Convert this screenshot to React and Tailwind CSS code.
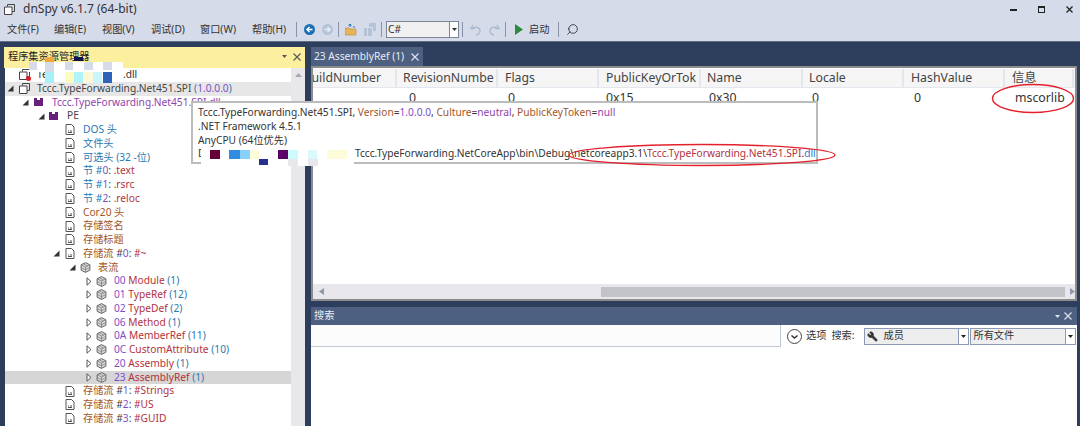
import { Wrench, Search } from "lucide-react";

const font = { fontFamily: '"Noto Sans", "Noto Sans CJK SC", sans-serif' };

/* ---------- small tree icons ---------- */
function DocIcon() {
  return (
    <svg width="10" height="11" viewBox="0 0 10 11" className="shrink-0">
      <path d="M1 .5h5.5L9 3v7.5H1z" fill="#fff" stroke="#555" />
      <path d="M3 7h1M5 7h2M3 8.5h4" stroke="#555" />
    </svg>
  );
}

function CubeIcon() {
  return (
    <svg width="11" height="11" viewBox="0 0 11 11" className="shrink-0">
      <path d="M5.5.6l4.4 2.2v5.4l-4.4 2.2-4.4-2.2V2.8z" fill="#d8d8d8" stroke="#666" />
      <path d="M1.1 2.8l4.4 2.2 4.4-2.2M5.5 5v5.4M3.3 1.8l4.4 2.2M1.1 5.5l4.4 2.2 4.4-2.2" fill="none" stroke="#777" strokeWidth=".7" />
    </svg>
  );
}

function PurpleIcon() {
  return (
    <svg width="9" height="8" viewBox="0 0 9 8" className="shrink-0">
      <path d="M0 0h3v2h3V0h3v8H0z" fill="#68217a" />
    </svg>
  );
}

function RefIcon() {
  return (
    <svg width="11" height="11" viewBox="0 0 11 11" className="shrink-0">
      <path d="M3.5 2.5V.5h7v7H8" fill="none" stroke="#444" />
      <path d="M.5 3h7.5v7.5H.5z" fill="#fff" stroke="#444" />
    </svg>
  );
}

function Arrow({ open }) {
  if (open) {
    return (
      <svg width="7" height="7" viewBox="0 0 7 7" className="shrink-0">
        <path d="M6.5 .5v6h-6z" fill="#333" />
      </svg>
    );
  }
  return (
    <svg width="6" height="9" viewBox="0 0 6 9" className="shrink-0">
      <path d="M1 .8L5 4.5 1 8.2z" fill="#fff" stroke="#555" />
    </svg>
  );
}

/* ---------- colours for text runs ---------- */
const B = "text-[#2b78b0]";
const O = "text-[#a3561f]";
const P = "text-[#7d4fc6]";
const R = "text-[#b3323c]";
const K = "text-[#444]";
const V = "text-[#8e44ad]";

// x = where the label starts, arrowAt = left edge of the expander, both in page pixels
const rows = [
  { x: 37, icon: "ref", text: [["Tccc.TypeForwarding.Net451.SPI", K], [" (", B], ["1.0.0.0", P], [")", B]], bg: "bg-[#e6e6e6]", arrow: "open", arrowAt: 7 },
  { x: 52, icon: "purple", text: [["Tccc.TypeForwarding.Net451.SPI.dll", V]], arrow: "open", arrowAt: 22 },
  { x: 67, icon: "purple", text: [["PE", K]], arrow: "open", arrowAt: 38 },
  { x: 83, icon: "doc", text: [["DOS 头", B]] },
  { x: 83, icon: "doc", text: [["文件头", B]] },
  { x: 83, icon: "doc", text: [["可选头 (32 -位)", B]] },
  { x: 83, icon: "doc", text: [["节 #", B], ["0", P], [": ", K], [".text", R]] },
  { x: 83, icon: "doc", text: [["节 #", B], ["1", P], [": ", K], [".rsrc", R]] },
  { x: 83, icon: "doc", text: [["节 #", B], ["2", P], [": ", K], [".reloc", R]] },
  { x: 83, icon: "doc", text: [["Cor20 头", O]] },
  { x: 83, icon: "doc", text: [["存储签名", O]] },
  { x: 83, icon: "doc", text: [["存储标题", O]] },
  { x: 83, icon: "doc", text: [["存储流 ", O], ["#", K], ["0", P], [": ", K], ["#~", R]], arrow: "open", arrowAt: 53 },
  { x: 98, icon: "cube", text: [["表流", O]], arrow: "open", arrowAt: 69 },
  { x: 114, icon: "cube", text: [["00 ", P], ["Module", R], [" (1)", B]], arrow: "closed", arrowAt: 86 },
  { x: 114, icon: "cube", text: [["01 ", P], ["TypeRef", R], [" (12)", B]], arrow: "closed", arrowAt: 86 },
  { x: 114, icon: "cube", text: [["02 ", P], ["TypeDef", R], [" (2)", B]], arrow: "closed", arrowAt: 86 },
  { x: 114, icon: "cube", text: [["06 ", P], ["Method", R], [" (1)", B]], arrow: "closed", arrowAt: 86 },
  { x: 114, icon: "cube", text: [["0A ", P], ["MemberRef", R], [" (11)", B]], arrow: "closed", arrowAt: 86 },
  { x: 114, icon: "cube", text: [["0C ", P], ["CustomAttribute", R], [" (10)", B]], arrow: "closed", arrowAt: 86 },
  { x: 114, icon: "cube", text: [["20 ", P], ["Assembly", R], [" (1)", B]], arrow: "closed", arrowAt: 86 },
  { x: 114, icon: "cube", text: [["23 ", P], ["AssemblyRef", R], [" (1)", B]], arrow: "closed", arrowAt: 86, bg: "bg-[#d6d6d6]" },
  { x: 83, icon: "doc", text: [["存储流 ", O], ["#", K], ["1", P], [": ", K], ["#Strings", R]] },
  { x: 83, icon: "doc", text: [["存储流 ", O], ["#", K], ["2", P], [": ", K], ["#US", R]] },
  { x: 83, icon: "doc", text: [["存储流 ", O], ["#", K], ["3", P], [": ", K], ["#GUID", R]] },
];

function TreeRow({ row }) {
  const icon =
    row.icon === "doc" ? <DocIcon /> : row.icon === "cube" ? <CubeIcon /> : row.icon === "ref" ? <RefIcon /> : <PurpleIcon />;
  return (
    <div className={`relative flex items-center h-[13.75px] whitespace-pre text-[10.2px] ${row.bg || ""}`} style={{ paddingLeft: row.x - 5 - 18 }}>
      {row.arrow && (
        <span className="absolute flex items-center h-full top-0" style={{ left: row.arrowAt - 5 }}>
          <Arrow open={row.arrow === "open"} />
        </span>
      )}
      <span className="flex items-center w-[11px] mr-[7px]">{icon}</span>
      <span>
        {row.text.map(([t, c], i) => (
          <span key={i} className={c}>
            {t}
          </span>
        ))}
      </span>
    </div>
  );
}

const columns = [
  ["uildNumber", 84, "justify-end pr-[14px]"],
  ["RevisionNumbe", 101, "pl-[6px]"],
  ["Flags", 101, "pl-[7px]"],
  ["PublicKeyOrTok", 102, "pl-[7px]"],
  ["Name", 102, "pl-[6px]"],
  ["Locale", 101, "pl-[6px]"],
  ["HashValue", 101, "pl-[7px]"],
  ["信息", 69, "pl-[7px]"],
];

const cells = [
  ["", 84, ""],
  ["0", 101, "pl-[12px]"],
  ["0", 101, "pl-[10px]"],
  ["0x15", 102, "pl-[7px]"],
  ["0x30", 102, "pl-[8px]"],
  ["0", 101, "pl-[9px]"],
  ["0", 101, "pl-[10px]"],
  ["mscorlib", 69, "pl-[10px]"],
];

/* mosaic patches that blur out the path in the original */
const patches = [
  [45, 57, 9, 5, "#f5a93b"], [74, 57, 9, 4, "#0c1250"], [29, 62, 94, 10, "#ffffff"],
  [29, 62, 8, 8, "#d5dbe8"], [45, 62, 9, 10, "#d5dbe8"], [65, 62, 8, 8, "#d5dbe8"], [84, 62, 9, 8, "#d5dbe8"], [103, 62, 9, 8, "#d5dbe8"],
  [45, 72, 9, 11, "#a8f0f8"], [65, 72, 9, 11, "#fdfcc0"], [74, 72, 9, 11, "#b0f4fa"], [84, 72, 9, 11, "#fdf9d8"], [93, 72, 9, 11, "#c8f6fa"], [103, 72, 9, 11, "#2e62b8"],
  [201, 149, 153, 9, "#ffffff"], [201, 158, 153, 8, "#ffffff"],
  [210, 150, 10, 9, "#660038"], [229, 150, 11, 9, "#2f8ce0"], [240, 150, 10, 9, "#86d0fb"], [250, 150, 9, 9, "#fdfcd8"],
  [259, 159, 9, 6, "#28308c"], [278, 150, 10, 9, "#5c0068"], [288, 150, 10, 9, "#cdfafc"], [308, 150, 9, 9, "#d8fafc"],
  [327, 150, 20, 9, "#fdfcd8"], [288, 159, 10, 7, "#e8e8ec"], [308, 159, 10, 7, "#e8e8ec"],
];

function Caret({ className = "" }) {
  return (
    <svg width="5" height="3" viewBox="0 0 5 3" className={className}>
      <path d="M0 0h5L2.5 3z" fill="currentColor" />
    </svg>
  );
}

function Sep() {
  return <div className="w-px h-[15px] bg-[#8a92a6] shrink-0" />;
}

function Combo({ label, icon, width }) {
  return (
    <div className="flex h-[17px] border border-[#8c98b4] bg-[#eeeeee] text-[10.2px] text-[#333]" style={{ width }}>
      <div className="flex-1 flex items-center pl-[2px] gap-[5px]">
        {icon}
        {label}
      </div>
      <div className="w-[10px] bg-white border-l border-[#8c98b4] flex items-center justify-center">
        <Caret className="text-[#222]" />
      </div>
    </div>
  );
}

export default function App() {
  return (
    <div className="relative w-[1080px] h-[426px] overflow-hidden bg-[#2d3e5c] flex flex-col" style={font}>
      {/* Title + menu */}
      <header className="h-[42px] shrink-0 bg-[#d6dbe9] border-b border-[#5f6c86]">
        <div className="flex items-center h-[18px] pl-[4px] text-[12px] text-[#333]">
          <RefIcon />
          <span className="ml-[8px]">dnSpy v6.1.7 (64-bit)</span>
          <div className="ml-auto flex items-center gap-[21px] pr-[7px]">
            <div className="w-[7px] h-[2px] bg-[#222] mt-[2px]" />
            <div className="w-[7px] h-[7px] border border-[#222] border-t-2" />
            <svg width="7" height="7" viewBox="0 0 7 7"><path d="M.5.5l6 6M6.5.5l-6 6" stroke="#222" strokeWidth="1.3" /></svg>
          </div>
        </div>
        <div className="flex items-center h-[23px] pl-[7px] text-[10.2px] text-[#333]">
          <div className="flex w-[284px] shrink-0">
            <span className="w-[47px]">文件(F)</span>
            <span className="w-[48px]">编辑(E)</span>
            <span className="w-[49px]">视图(V)</span>
            <span className="w-[49px]">调试(D)</span>
            <span className="w-[52px]">窗口(W)</span>
            <span>帮助(H)</span>
          </div>
          <div className="ml-[5px]"><Sep /></div>
          <svg width="11" height="11" viewBox="0 0 11 11" className="ml-[7px]"><circle cx="5.5" cy="5.5" r="5.5" fill="#1b6fb5" /><path d="M8.5 5.5H3.5M5.5 3L3 5.5 5.5 8" stroke="#fff" strokeWidth="1.5" fill="none" /></svg>
          <svg width="11" height="11" viewBox="0 0 11 11" className="ml-[7px]"><circle cx="5.5" cy="5.5" r="5.5" fill="#b4c3d8" /><path d="M2.5 5.5h5M5.5 3L8 5.5 5.5 8" stroke="#e8edf4" strokeWidth="1.5" fill="none" /></svg>
          <div className="ml-[5px]"><Sep /></div>
          <svg width="12" height="13" viewBox="0 0 12 13" className="ml-[6px]"><path d="M0 5h4l1 1h6v6H0z" fill="#e8b45a" stroke="#b98a35" strokeWidth=".6" /><path d="M5 4V1M3.5 2.5L5 1l1.5 1.5M8 4h2" stroke="#1b6fb5" fill="none" /></svg>
          <svg width="12" height="13" viewBox="0 0 12 13" className="ml-[7px]"><path d="M0 5h3v8H0zM4 5h4v8H4zM5 0h7v8H9V4H5z" fill="#b4c3d8" /></svg>
          <div className="ml-[5px]"><Sep /></div>
          <div className="ml-[4px] flex w-[73px] h-[17px] border border-[#7d8699] bg-[#f0f0f0] text-[10.2px]">
            <span className="flex-1 pl-[1px] leading-[15px]">C#</span>
            <span className="w-[9px] bg-white border-l border-[#7d8699] flex items-center justify-center"><Caret /></span>
          </div>
          <div className="ml-[3px]"><Sep /></div>
          <svg width="12" height="12" viewBox="0 0 12 12" className="ml-[7px]"><path d="M3 1L1 4.5h4M1.5 4.5C5 2 10 3 10 7c0 2-2 3.5-4 4" fill="none" stroke="#a9bad0" strokeWidth="1.4" /></svg>
          <svg width="12" height="12" viewBox="0 0 12 12" className="ml-[6px]"><path d="M9 1l2 3.5H7M10.5 4.5C7 2 2 3 2 7c0 2 2 3.5 4 4" fill="none" stroke="#a9bad0" strokeWidth="1.4" /></svg>
          <div className="ml-[5px]"><Sep /></div>
          <svg width="8" height="11" viewBox="0 0 8 11" className="ml-[9px]"><path d="M0 0l8 5.5L0 11z" fill="#2b8a3e" /></svg>
          <span className="ml-[6px] w-[21px] shrink-0 whitespace-nowrap">启动</span>
          <div className="ml-[8px]"><Sep /></div>
          <Search size={13} className="ml-[7px] -scale-x-100 text-[#333]" strokeWidth={1.6} />
        </div>
      </header>

      {/* Main */}
      <div className="flex-1 min-h-0 flex pl-[4px] pt-[5px] gap-[5px]">
        {/* Tree panel */}
        <aside className="w-[301px] shrink-0 flex flex-col">
          <div className="flex items-center h-[21px] bg-[#fcef9e] pl-[4px] pr-[4px] pb-[2px] text-[10.2px] text-[#222]">
            程序集资源管理器
            <Caret className="ml-auto text-[#555]" />
            <span className="ml-[6px] text-[#555]">
              <svg width="8" height="8" viewBox="0 0 8 8"><path d="M.5.5l7 7M7.5.5l-7 7" stroke="#555" strokeWidth="1.1" /></svg>
            </span>
          </div>
          <div className="flex-1 flex min-h-0 pl-px">
            <div className="flex-1 bg-white overflow-hidden">
              <div className="relative flex items-center h-[13.75px] pl-[14px] text-[10.2px] text-[#333]">
                <span className="relative w-[11px] mr-[7px]">
                  <RefIcon />
                  <span className="absolute -right-[1px] -bottom-[1px] w-[5px] h-[5px] rounded-full bg-[#d8202c]" />
                </span>
                <span className="w-[86px]">Te</span>
                <span>.dll</span>
              </div>
              {rows.map((r, i) => (
                <TreeRow key={i} row={r} />
              ))}
            </div>
            <div className="w-[14px] bg-[#e8e8ec] flex justify-center pt-[5px]">
              <svg width="7" height="4" viewBox="0 0 7 4"><path d="M3.5 0L7 4H0z" fill="#a8a8b0" /></svg>
            </div>
          </div>
        </aside>

        {/* Right column */}
        <main className="w-[766px] shrink-0 flex flex-col ml-[1px]">
          <div className="flex h-[19px]">
            <div className="flex items-center w-[112px] bg-[#4d6082] text-[10.2px] text-[#e8ecf2] pl-[3px]">
              23 AssemblyRef (1)
              <svg width="8" height="8" viewBox="0 0 8 8" className="ml-auto mr-[4px]"><path d="M.5.5l7 7M7.5.5l-7 7" stroke="#dfe5ee" strokeWidth="1.1" /></svg>
            </div>
          </div>
          <section className="h-[235px] border-2 border-[#8c8c8c] bg-white flex flex-col text-[#333]">
            <div className="flex h-[19px] bg-[#f5f5f5] border-b border-[#e4e6ee] mt-[1px] text-[12.3px] text-[#444]">
              {columns.map(([t, w, c]) => (
                <div key={t} className={`flex items-center shrink-0 overflow-hidden whitespace-nowrap border-r-2 border-[#e4e6ee] ${c}`} style={{ width: w }}>
                  {t}
                </div>
              ))}
            </div>
            <div className="flex h-[21px] text-[12.3px]">
              {cells.map(([t, w, c], i) => (
                <div key={i} className={`flex items-center shrink-0 overflow-hidden ${c}`} style={{ width: w }}>
                  {t}
                </div>
              ))}
            </div>
            <div className="flex-1" />
            <div className="h-[15px] bg-[#e8e8ec] flex items-center">
              <svg width="5" height="7" viewBox="0 0 5 7" className="ml-[6px]"><path d="M5 0v7L0 3.5z" fill="#8f97a8" /></svg>
              <div className="ml-[277px] w-[467px] h-[10px] bg-[#c2c3c9]" />
              <svg width="5" height="7" viewBox="0 0 5 7" className="ml-[5px]"><path d="M0 0v7l5-3.5z" fill="#8f97a8" /></svg>
            </div>
          </section>

          {/* Search panel */}
          <section className="mt-[6px] flex-1 flex flex-col min-h-0">
            <div className="flex items-center h-[18px] bg-[#4d6082] pl-[3px] pr-[5px] text-[10.2px] text-[#e8ecf2]">
              搜索
              <Caret className="ml-auto text-[#dfe5ee]" />
              <svg width="8" height="8" viewBox="0 0 8 8" className="ml-[4px]"><path d="M.5.5l7 7M7.5.5l-7 7" stroke="#dfe5ee" strokeWidth="1.1" /></svg>
            </div>
            <div className="flex-1 bg-white">
              <div className="flex items-center h-[22px] text-[10.2px] text-[#333]">
                <div className="w-[470px] h-full bg-[#fcfcfc] border-r border-b border-[#c0c8d8]" />
                <svg width="15" height="15" viewBox="0 0 15 15" className="ml-[6px]"><circle cx="7.5" cy="7.5" r="7" fill="#fff" stroke="#444" /><path d="M4.5 6.5l3 2.5 3-2.5" fill="none" stroke="#333" strokeWidth="1.5" /></svg>
                <span className="ml-[4px]">选项</span>
                <span className="ml-[5px]">搜索:</span>
                <div className="ml-[10px] flex gap-px">
                  <Combo width={105} label="成员" icon={<Wrench size={11} className="text-[#333] -scale-x-100" fill="#333" />} />
                  <Combo width={106} label="所有文件" />
                </div>
              </div>
            </div>
          </section>
        </main>
      </div>

      {/* Tooltip over the tree and the table */}
      <div className="absolute left-[191px] top-[101px] w-[627px] h-[63px] bg-white border-2 border-[#bcbcbc] pl-[5px] pt-[3px] text-[10.2px] leading-[13.8px] text-[#333] whitespace-pre">
        <div>
          <span>Tccc.TypeForwarding.Net451.SPI, </span>
          <span className={O}>Version</span>=<span className={P}>1.0.0.0</span>, <span className={O}>Culture</span>=<span className={V}>neutral</span>, <span className={O}>PublicKeyToken</span>=<span className={V}>null</span>
        </div>
        <div>.NET Framework 4.5.1</div>
        <div>AnyCPU (64位优先)</div>
        <div className="flex">
          <span className="w-[157px] shrink-0">D</span>
          <span>
            Tccc.TypeForwarding.NetCoreApp\bin\Debug\netcoreapp3.1\<span className={R}>Tccc.TypeForwarding.Net451.SPI</span>.<span className="text-[#3a6fd0]">dll</span>
          </span>
        </div>
      </div>

      {/* Mosaic patches */}
      {patches.map(([x, y, w, h, c], i) => (
        <div key={i} className="absolute" style={{ left: x, top: y, width: w, height: h, background: c }} />
      ))}

      {/* Red hand-drawn marks */}
      <svg className="absolute left-0 top-0 pointer-events-none" width="1080" height="426">
        <ellipse cx="1033" cy="98.5" rx="40.5" ry="14" fill="none" stroke="#e3202c" strokeWidth="1.4" />
        <ellipse cx="702" cy="155" rx="133" ry="10.5" fill="none" stroke="#e3202c" strokeWidth="1.4" />
      </svg>
    </div>
  );
}
